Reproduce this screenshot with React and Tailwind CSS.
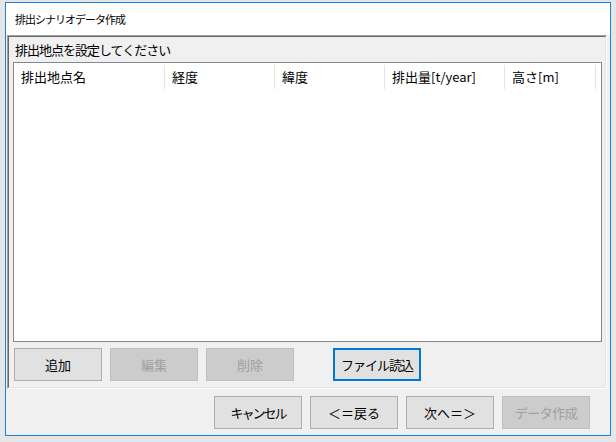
import React from 'react';

const font = { fontFamily: '"Noto Sans CJK JP", "Noto Sans", sans-serif' };

const columns = [
  { label: '排出地点名', w: 'w-[151px]' },
  { label: '経度', w: 'w-[110px]' },
  { label: '緯度', w: 'w-[110px]' },
  { label: '排出量[t/year]', w: 'w-[120px]' },
  { label: '高さ[m]', w: 'w-[91px]' },
];

const Button = ({ children, disabled, focused, className = '' }) => (
  <button
    className={`w-[88px] h-[33px] flex items-center justify-center text-[13px] leading-none ${
      disabled
        ? 'bg-[#cccccc] border border-[#bfbfbf] text-[#a0a0a0]'
        : focused
        ? 'bg-[#e1e1e1] border-2 border-[#0078d7] text-black'
        : 'bg-[#e1e1e1] border border-[#adadad] text-black'
    } ${className}`}
  >
    {children}
  </button>
);

export default function App() {
  return (
    <div className="min-h-[442px] bg-[#e6e6e6] pl-[5px] pt-[2px]" style={font}>
      <div className="w-[606px] h-[434px] border border-[#1883d7] bg-[#f0f0f0] flex flex-col">
        <div className="h-[32px] bg-white flex items-center pl-[9px] text-[11px] tracking-[-1px] text-black">
          排出シナリオデータ作成
        </div>

        <div className="pl-[1px] pr-[3px]">
          <div className="h-[354px] border border-t-[#a0a0a0] border-l-[#a0a0a0] border-r-white border-b-white">
            <div className="h-full border border-t-[#696969] border-l-[#696969] border-r-[#e3e3e3] border-b-[#e3e3e3] flex flex-col">
              <div className="h-[25px] flex items-center pl-[6px] text-[13px] tracking-[-1px] text-black">
                排出地点を設定してください
              </div>

              <div className="ml-[4px] w-[589px] h-[280px] bg-white border border-[#828790]">
                <div className="flex h-[26px] pt-[2px]">
                  {columns.map((c) => (
                    <div
                      key={c.label}
                      className={`${c.w} h-[24px] border-r border-[#e5e5e5] flex items-center pl-[7px] text-[13px] text-black whitespace-nowrap`}
                    >
                      {c.label}
                    </div>
                  ))}
                </div>
              </div>

              <div className="flex mt-[6px] ml-[5px] gap-[8px]">
                <Button>追加</Button>
                <Button disabled>編集</Button>
                <Button disabled>削除</Button>
                <Button focused className="ml-[31px] tracking-[-1px]">ファイル読込</Button>
              </div>
            </div>
          </div>
        </div>

        <div className="flex justify-end gap-[8px] pr-[20px] mt-[7px]">
          <Button className="tracking-[-2px]">キャンセル</Button>
          <Button>＜＝戻る</Button>
          <Button>次へ＝＞</Button>
          <Button disabled className="tracking-[-0.5px]">データ作成</Button>
        </div>
      </div>
    </div>
  );
}
